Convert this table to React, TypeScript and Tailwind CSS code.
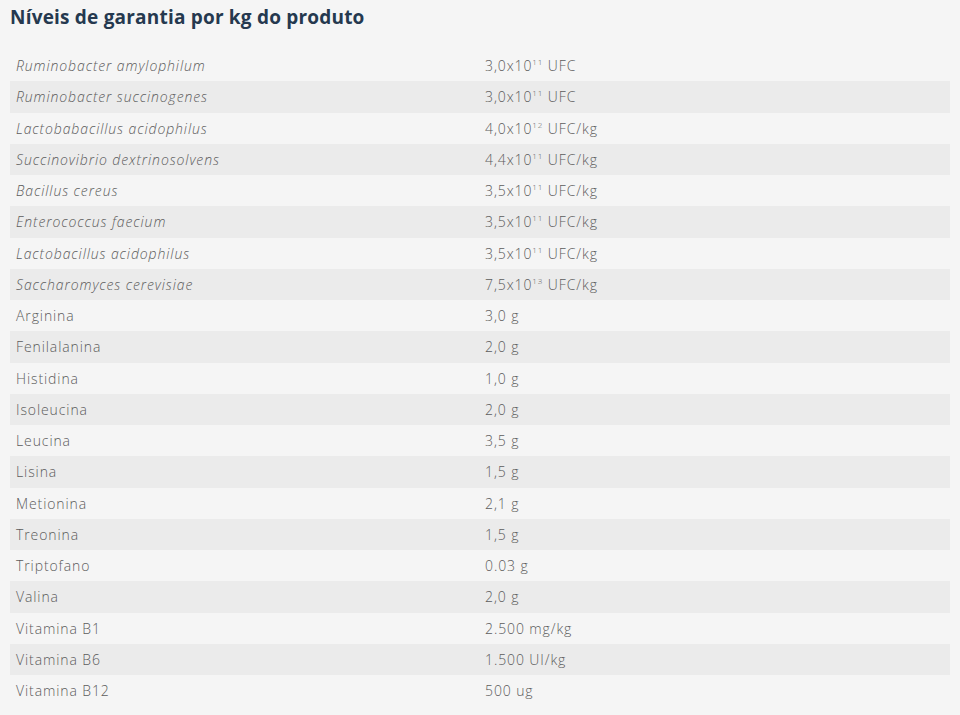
import React from 'react';

type Row = { name: string; value: React.ReactNode; italic?: boolean };

const ufc = (base: string, exp: string, unit: string) => (
  <>
    {base}x10<sup className="text-[8px] -top-[6px]">{exp}</sup> {unit}
  </>
);

const rows: Row[] = [
  { name: 'Ruminobacter amylophilum', value: ufc('3,0', '11', 'UFC'), italic: true },
  { name: 'Ruminobacter succinogenes', value: ufc('3,0', '11', 'UFC'), italic: true },
  { name: 'Lactobabacillus acidophilus', value: ufc('4,0', '12', 'UFC/kg'), italic: true },
  { name: 'Succinovibrio dextrinosolvens', value: ufc('4,4', '11', 'UFC/kg'), italic: true },
  { name: 'Bacillus cereus', value: ufc('3,5', '11', 'UFC/kg'), italic: true },
  { name: 'Enterococcus faecium', value: ufc('3,5', '11', 'UFC/kg'), italic: true },
  { name: 'Lactobacillus acidophilus', value: ufc('3,5', '11', 'UFC/kg'), italic: true },
  { name: 'Saccharomyces cerevisiae', value: ufc('7,5', '13', 'UFC/kg'), italic: true },
  { name: 'Arginina', value: '3,0 g' },
  { name: 'Fenilalanina', value: '2,0 g' },
  { name: 'Histidina', value: '1,0 g' },
  { name: 'Isoleucina', value: '2,0 g' },
  { name: 'Leucina', value: '3,5 g' },
  { name: 'Lisina', value: '1,5 g' },
  { name: 'Metionina', value: '2,1 g' },
  { name: 'Treonina', value: '1,5 g' },
  { name: 'Triptofano', value: '0.03 g' },
  { name: 'Valina', value: '2,0 g' },
  { name: 'Vitamina B1', value: '2.500 mg/kg' },
  { name: 'Vitamina B6', value: '1.500 UI/kg' },
  { name: 'Vitamina B12', value: '500 ug' },
];

export default function App() {
  return (
    <div className="w-[960px] h-[715px] bg-[#f5f5f5] px-[10px] overflow-hidden" style={{ fontFamily: '"Open Sans", sans-serif' }}>
      <h2 className="pt-[4px] h-[50px] text-[19px] font-bold text-[#25394f] leading-[26px] tracking-[0.2px]">
        Níveis de garantia por kg do produto
      </h2>
      <div className="w-[940px] text-[14px] font-light text-[#5c5c5c] tracking-[0.9px]">
        {rows.map((r, i) => (
          <div key={i} className={`grid grid-cols-2 h-[31.25px] items-center ${i % 2 === 1 ? 'bg-[#ebebeb]' : ''}`}>
            <div className={`pl-[6px] ${r.italic ? 'italic' : ''}`}>{r.name}</div>
            <div className="pl-[5px]">{r.value}</div>
          </div>
        ))}
      </div>
    </div>
  );
}
